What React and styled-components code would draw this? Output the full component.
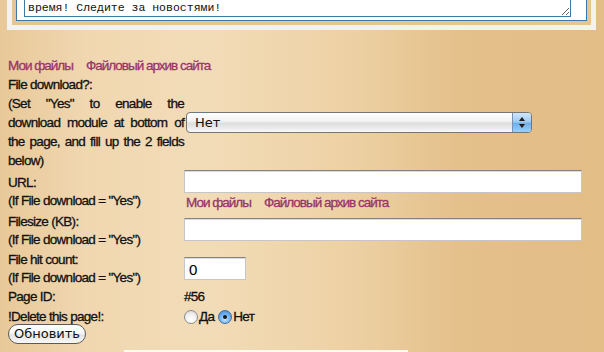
import React from "react";
import styled, { createGlobalStyle } from "styled-components";

const Global = createGlobalStyle`
  html, body { margin: 0; padding: 0; }
  body {
    width: 604px;
    height: 352px;
    overflow: hidden;
    background: linear-gradient(to right, #e8c898 0%, #f0d7b0 14%, #f2dcb8 34%, #edd1a4 58%, #e4c08b 76%, #e3bd86 100%);
    font-family: "Liberation Sans", Arial, sans-serif;
    color: #111;
  }
`;

const Page = styled.div`
  display: flex;
  flex-direction: column;
`;

const Frame = styled.div`
  box-sizing: border-box;
  width: 589px;
  margin: -29px 0 0 7px;
  border: 5px solid #f3f2ef;
  border-top: none;
  background: #e6c593;
  padding: 0 4px 4px;
`;

const Inner = styled.div`
  border: 1px solid #3d78a7;
  border-top: none;
  background: #fff;
  padding: 0 16px 3px 7px;
`;

const Area = styled.textarea`
  display: block;
  box-sizing: border-box;
  width: 547px;
  height: 46px;
  margin: 0;
  padding: 2px 3px 0;
  border: 1px solid #3d78a7;
  border-top: none;
  font: 11.5px/14px "Liberation Mono", "Courier New", monospace;
  color: #111;
  overflow: hidden;
  background: #fff;
  outline: none;
`;

const Narrow = `
  font-family: "Liberation Sans", Arial, sans-serif;
  font-size: 13.5px;
  letter-spacing: -0.7px;
  -webkit-text-stroke: 0.3px currentColor;
`;

const LinkBar = styled.div`
  ${Narrow}
  letter-spacing: -1px;
  display: flex;
  gap: 13px;
  line-height: 18px;
  margin: ${(p) => p.$top || "0"};
`;

const NavLink = styled.a`
  color: #973568;
  text-decoration: none;
`;

const Form = styled.div`
  ${Narrow}
  display: grid;
  grid-template-columns: 176px 1fr;
  column-gap: 0;
  row-gap: 1.5px;
  align-items: center;
  padding-left: 8px;
`;

const Label = styled.div`
  line-height: ${(p) => p.$lh || 18}px;
  text-align: ${(p) => (p.$justify ? "justify" : "left")};
`;

const Value = styled.div`
  display: flex;
  flex-direction: column;
  align-items: flex-start;
  line-height: 18px;
  margin-top: ${(p) => p.$mt || 0}px;
  padding-bottom: ${(p) => p.$pb || 0}px;
`;

const SelectBox = styled.div`
  box-sizing: border-box;
  width: 346px;
  height: 21px;
  margin-left: 2px;
  display: flex;
  align-items: stretch;
  border: 1px solid #767676;
  border-radius: 4px;
  background: linear-gradient(#ffffff 0%, #f4f4f4 40%, #dedede 55%, #ebebeb 80%, #fafafa 100%);
  font: 13px/19px "DejaVu Sans", sans-serif;
  letter-spacing: 0;
  -webkit-text-stroke: 0;
  overflow: hidden;
`;

const SelectText = styled.span`
  flex: 1;
  padding-left: 8px;
  color: #111;
`;

const SelectArrow = styled.span`
  width: 18px;
  display: flex;
  flex-direction: column;
  align-items: center;
  justify-content: center;
  gap: 3px;
  border-left: 1px solid #7a93b3;
  background: linear-gradient(#cfe6fb 0%, #9fcdf5 45%, #6cb0ef 55%, #9ad0fb 100%);
`;

const Tri = styled.span`
  width: 0;
  height: 0;
  border-left: 3px solid transparent;
  border-right: 3px solid transparent;
  ${(p) => (p.$down ? "border-top: 4px solid #1c1c1c;" : "border-bottom: 4px solid #1c1c1c;")}
`;

const TextInput = styled.input`
  box-sizing: border-box;
  width: ${(p) => p.$w}px;
  height: 23px;
  margin: 0;
  padding: 1px 4px 0;
  border: 1px solid #c6c6c6;
  border-top-color: #828282;
  box-shadow: inset 0 1px 0 #dcdcdc;
  background: #fff;
  font-family: "Liberation Sans", Arial, sans-serif;
  font-size: 15px;
  letter-spacing: -0.5px;
  -webkit-text-stroke: 0.1px #000;
  color: #000;
  outline: none;
`;

const RadioRow = styled.div`
  display: flex;
  align-items: center;
  line-height: 18px;
`;

const Radio = styled.span`
  box-sizing: border-box;
  width: 14px;
  height: 14px;
  border-radius: 50%;
  margin-left: ${(p) => p.$ml || 0}px;
  margin-right: 1px;
  display: flex;
  align-items: center;
  justify-content: center;
  border: 1px solid ${(p) => (p.$on ? "#3f6b9e" : "#8c8c8c")};
  background: ${(p) =>
    p.$on
      ? "radial-gradient(circle at 50% 70%, #bfe2ff 0%, #6aaef0 55%, #3d83d4 100%)"
      : "radial-gradient(circle at 50% 75%, #ffffff 0%, #f2f2f2 50%, #cfcfcf 100%)"};
  &::after {
    content: "";
    display: ${(p) => (p.$on ? "block" : "none")};
    width: 4px;
    height: 4px;
    border-radius: 50%;
    background: #1a1a1a;
  }
`;

const Button = styled.button`
  box-sizing: border-box;
  width: 78px;
  height: 20px;
  margin: -2px 0 0 8px;
  padding: 0;
  border: 1px solid #5a5a5a;
  border-radius: 10px;
  background: linear-gradient(#ffffff 0%, #f6f6f6 45%, #e4e4e4 55%, #f8f8f8 100%);
  font: 13px/18px "DejaVu Sans", sans-serif;
  color: #111;
  align-self: flex-start;
`;

const Footer = styled.div`
  width: 284px;
  height: 4px;
  margin: 6px 0 0 124px;
  background: #fdfaf5;
`;

function Links({ top }) {
  return (
    <LinkBar $top={top}>
      <NavLink href="#">Мои файлы</NavLink>
      <NavLink href="#">Файловый архив сайта</NavLink>
    </LinkBar>
  );
}

export default function App() {
  return (
    <Page>
      <Global />
      <Frame>
        <Inner>
          <Area
            readOnly
            defaultValue={
              "Добро пожаловать на наш сайт! Здесь вы найдёте\nмного интересного. Мы обновляемся в любое\nвремя! Следите за новостями!"
            }
          />
        </Inner>
      </Frame>
      <Links top="27px 0 0 8px" />
      <Form>
        <Label $lh={19} $justify>
          File download?:
          <br />
          (Set "Yes" to enable the download module at bottom of the page, and fill up the 2 fields below)
        </Label>
        <Value>
          <SelectBox>
            <SelectText>Нет</SelectText>
            <SelectArrow>
              <Tri />
              <Tri $down />
            </SelectArrow>
          </SelectBox>
        </Value>

        <Label>
          URL:
          <br />
          (If File download = "Yes")
        </Label>
        <Value $mt={-2}>
          <TextInput $w={398} />
          <Links top="1px 0 0 2px" />
        </Value>

        <Label>
          Filesize (KB):
          <br />
          (If File download = "Yes")
        </Label>
        <Value $pb={4}>
          <TextInput $w={398} />
        </Value>

        <Label>
          File hit count:
          <br />
          (If File download = "Yes")
        </Label>
        <Value>
          <TextInput $w={62} defaultValue="0" />
        </Value>

        <Label>Page ID:</Label>
        <Value>#56</Value>

        <Label>!Delete this page!:</Label>
        <Value>
          <RadioRow>
            <Radio />
            Да
            <Radio $on $ml={4} />
            Нет
          </RadioRow>
        </Value>
      </Form>
      <Button>Обновить</Button>
      <Footer />
    </Page>
  );
}
